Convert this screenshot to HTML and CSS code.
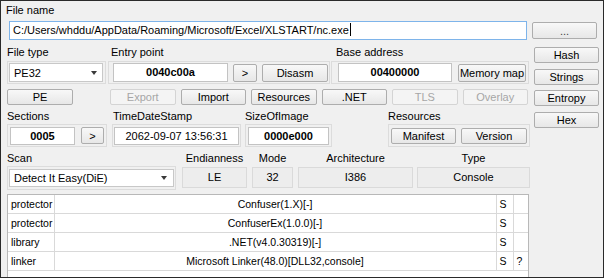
FILE: index.html
```html
<!DOCTYPE html>
<html lang="en">
<head>
  <meta charset="UTF-8">
  <title>Detect It Easy</title>
  <link rel="stylesheet" href="styles.css">
</head>
<body>

  <div class="window">

    <!-- File name -->
    <div class="caption cap-file">File name</div>
    <div class="path-row">
      <div class="path-input">C:/Users/whddu/AppData/Roaming/Microsoft/Excel/XLSTART/nc.exe<span class="caret"></span></div>
      <button class="btn btn-browse">...</button>
    </div>

    <div class="body">
      <div class="main">

        <!-- File type / Entry point / Base address -->
        <div class="row row-top">
          <div class="field f-type">
            <div class="caption">File type</div>
            <div class="group g-type">
              <div class="combo">PE32<span class="arrow"></span></div>
            </div>
          </div>
          <div class="field f-entry">
            <div class="caption">Entry point</div>
            <div class="group g-entry">
              <div class="value v-entry">0040c00a</div>
              <button class="btn btn-go">&gt;</button>
              <button class="btn btn-disasm">Disasm</button>
            </div>
          </div>
          <div class="field f-base">
            <div class="caption">Base address</div>
            <div class="group g-base">
              <div class="value v-base">00400000</div>
              <button class="btn btn-memmap">Memory map</button>
            </div>
          </div>
        </div>

        <!-- Sub viewers -->
        <div class="row row-buttons">
          <button class="btn btn-pe">PE</button>
          <div class="viewers">
            <button class="btn" disabled>Export</button>
            <button class="btn">Import</button>
            <button class="btn">Resources</button>
            <button class="btn">.NET</button>
            <button class="btn" disabled>TLS</button>
            <button class="btn" disabled>Overlay</button>
          </div>
        </div>

        <!-- Sections / TimeDateStamp / SizeOfImage / Resources -->
        <div class="row row-mid">
          <div class="field f-sections">
            <div class="caption">Sections</div>
            <div class="group g-sections">
              <div class="value v-sections">0005</div>
              <button class="btn btn-go">&gt;</button>
            </div>
          </div>
          <div class="field f-time">
            <div class="caption">TimeDateStamp</div>
            <div class="group g-time">
              <div class="value v-time">2062-09-07 13:56:31</div>
            </div>
          </div>
          <div class="field f-size">
            <div class="caption">SizeOfImage</div>
            <div class="group g-size">
              <div class="value v-size">0000e000</div>
            </div>
          </div>
          <div class="field f-res">
            <div class="caption">Resources</div>
            <div class="group g-res">
              <button class="btn btn-manifest">Manifest</button>
              <button class="btn btn-version">Version</button>
            </div>
          </div>
        </div>

        <!-- Scan / info -->
        <div class="row row-scan">
          <div class="field f-scan">
            <div class="caption">Scan</div>
            <div class="group g-scan">
              <div class="combo combo-scan">Detect It Easy(DiE)<span class="arrow"></span></div>
            </div>
          </div>
          <div class="field info f-endian">
            <div class="caption">Endianness</div>
            <div class="info-box">LE</div>
          </div>
          <div class="field info f-mode">
            <div class="caption">Mode</div>
            <div class="info-box">32</div>
          </div>
          <div class="field info f-arch">
            <div class="caption">Architecture</div>
            <div class="info-box">I386</div>
          </div>
          <div class="field info f-kind">
            <div class="caption">Type</div>
            <div class="info-box">Console</div>
          </div>
        </div>

        <!-- Results -->
        <div class="results">
          <table>
            <colgroup>
              <col class="c-kind">
              <col class="c-name">
              <col class="c-s">
              <col class="c-q">
            </colgroup>
            <tr><td>protector</td><td class="name">Confuser(1.X)[-]</td><td>S</td><td></td></tr>
            <tr><td>protector</td><td class="name">ConfuserEx(1.0.0)[-]</td><td>S</td><td></td></tr>
            <tr><td>library</td><td class="name">.NET(v4.0.30319)[-]</td><td>S</td><td></td></tr>
            <tr><td>linker</td><td class="name">Microsoft Linker(48.0)[DLL32,console]</td><td>S</td><td>?</td></tr>
          </table>
        </div>

      </div>

      <div class="side">
        <button class="btn">Hash</button>
        <button class="btn">Strings</button>
        <button class="btn">Entropy</button>
        <button class="btn">Hex</button>
      </div>
    </div>

  </div>

</body>
</html>
```

FILE: styles.css
```css
body {
  margin: 0;
}

.window {
  width: 604px;
  height: 278px;
  box-sizing: border-box;
  border: 1px solid #2a2a2a;
  background: #f0f0f0;
  overflow: hidden;
  font-family: "Liberation Sans", Arial, sans-serif;
  font-size: 11px;
  color: #000;
}

.caption {
  height: 13px;
  line-height: 13px;
  white-space: nowrap;
}

.cap-file {
  margin: 3px 0 0 5px;
}

/* buttons */
.btn {
  box-sizing: border-box;
  height: 16px;
  padding: 0;
  border: 1px solid #adadad;
  border-radius: 2px;
  background: linear-gradient(#f8f8f8, #e7e7e7);
  font: inherit;
  line-height: 14px;
  color: #000;
  text-align: center;
  white-space: nowrap;
}

.btn:disabled {
  border-color: #d4d4d4;
  background: #f4f4f4;
  color: #a6a6a6;
}

/* path */
.path-row {
  display: flex;
  align-items: flex-start;
  margin: 4px 0 0 8px;
}

.path-input {
  box-sizing: border-box;
  width: 518px;
  height: 19px;
  padding-left: 3px;
  border: 1px solid #7eb4ea;
  background: #fff;
  line-height: 17px;
  white-space: nowrap;
}

.caret {
  display: inline-block;
  width: 1px;
  height: 13px;
  margin-left: 1px;
  background: #000;
  vertical-align: -2px;
}

.btn-browse {
  width: 65px;
  height: 17px;
  margin: 1px 0 0 5px;
  color: #444;
}

/* layout */
.body {
  display: flex;
}

.main {
  width: 523px;
  margin-left: 6px;
}

.side {
  display: flex;
  flex-direction: column;
  gap: 5.7px;
  width: 65px;
  margin-left: 4px;
  padding-top: 7px;
}

.row {
  display: flex;
}

.group {
  box-sizing: border-box;
  display: flex;
  align-items: center;
  height: 23px;
  border: 1px solid #dcdcdc;
}

.value {
  box-sizing: border-box;
  height: 19px;
  border: 1px solid #c3c3c3;
  background: #fff;
  font-weight: bold;
  line-height: 17px;
  text-align: center;
}

.combo {
  box-sizing: border-box;
  display: flex;
  align-items: center;
  justify-content: space-between;
  height: 19px;
  padding: 0 5px 0 4px;
  border: 1px solid #c8c8c8;
  background: #fff;
  white-space: nowrap;
}

.arrow {
  width: 0;
  height: 0;
  border-left: 3.5px solid transparent;
  border-right: 3.5px solid transparent;
  border-top: 4px solid #3a3a3a;
}

/* row: file type / entry point / base address */
.row-top {
  margin-top: 6px;
}

.row-top .group {
  margin-top: 2px;
}

.f-type {
  width: 99px;
}

.g-type {
  padding: 0 2px 0 1px;
}

.g-type .combo {
  width: 94px;
}

.f-entry {
  margin-left: 2px;
}

.f-entry .caption {
  padding-left: 3px;
}

.g-entry {
  width: 222px;
  padding-left: 4px;
}

.v-entry {
  width: 115px;
}

.g-entry .btn {
  height: 18px;
  margin-left: 5px;
  line-height: 16px;
}

.btn-go {
  width: 24px;
}

.btn-disasm {
  width: 66px;
}

.f-base {
  margin-left: 1px;
}

.f-base .caption {
  padding-left: 5px;
}

.g-base {
  width: 198px;
  padding-left: 6px;
}

.v-base {
  width: 114px;
}

.btn-memmap {
  width: 68px;
  height: 18px;
  margin-left: 6px;
  line-height: 16px;
}

/* row: viewers */
.row-buttons {
  margin-top: 5px;
}

.btn-pe {
  width: 66px;
}

.viewers {
  display: flex;
  gap: 5px;
  margin-left: 37px;
}

.viewers .btn {
  width: 65.5px;
}

/* row: sections / time / size / resources */
.row-mid {
  margin-top: 5px;
}

.row-mid .caption {
  height: 14px;
}

.row-mid .value {
  height: 18px;
  line-height: 16px;
}

.f-sections {
  width: 100px;
}

.g-sections {
  padding-left: 2px;
}

.v-sections {
  width: 65px;
}

.g-sections .btn-go {
  width: 23px;
  height: 17px;
  margin-left: 6px;
}

.f-time {
  margin-left: 5px;
}

.f-time .caption {
  padding-left: 1px;
}

.g-time {
  width: 129px;
  padding-left: 1px;
}

.v-time {
  width: 125px;
  font-weight: normal;
}

.f-size {
  margin-left: 4px;
}

.g-size {
  width: 87px;
  padding-left: 2px;
}

.v-size {
  width: 81px;
}

.f-res {
  margin-left: 56px;
}

.g-res {
  width: 142px;
  padding-left: 2px;
}

.g-res .btn {
  height: 16px;
}

.btn-manifest {
  width: 65px;
}

.btn-version {
  width: 66px;
  margin-left: 5px;
}

/* row: scan / info */
.row-scan {
  margin-top: 5px;
}

.row-scan .caption {
  height: 14px;
}

.row-scan .group {
  margin-top: 0;
}

.g-scan {
  width: 169px;
  height: 24px;
  padding-left: 1px;
}

.combo-scan {
  width: 165px;
  height: 18px;
  padding-right: 6px;
}

.info .caption {
  text-align: center;
}

.info-box {
  box-sizing: border-box;
  height: 21px;
  margin-top: 1px;
  border: 1px solid #dadada;
  background: #ededed;
  line-height: 19px;
  text-align: center;
}

.f-endian {
  width: 65px;
  margin-left: 6px;
}

.f-mode {
  width: 41px;
  margin-left: 5px;
}

.f-arch {
  width: 115px;
  margin-left: 5px;
}

.f-kind {
  width: 113px;
  margin-left: 4px;
}

/* results */
.results {
  box-sizing: border-box;
  width: 522px;
  height: 90px;
  margin-top: 4px;
  border: 1px solid #b8b8b8;
  background: #fff;
}

.results table {
  width: 520px;
  table-layout: fixed;
  border-collapse: collapse;
  font-size: 10.5px;
}

.c-kind {
  width: 46px;
}

.c-name {
  width: 442px;
}

.c-s {
  width: 17px;
}

.c-q {
  width: 15px;
}

.results td {
  height: 18px;
  padding: 0 0 0 3px;
  border-bottom: 1px solid #d9d9d9;
  border-right: 1px solid #d9d9d9;
  white-space: nowrap;
  overflow: hidden;
}

.results td:last-child {
  border-right: none;
}

.results td.name {
  padding: 0;
  text-align: center;
}
```
